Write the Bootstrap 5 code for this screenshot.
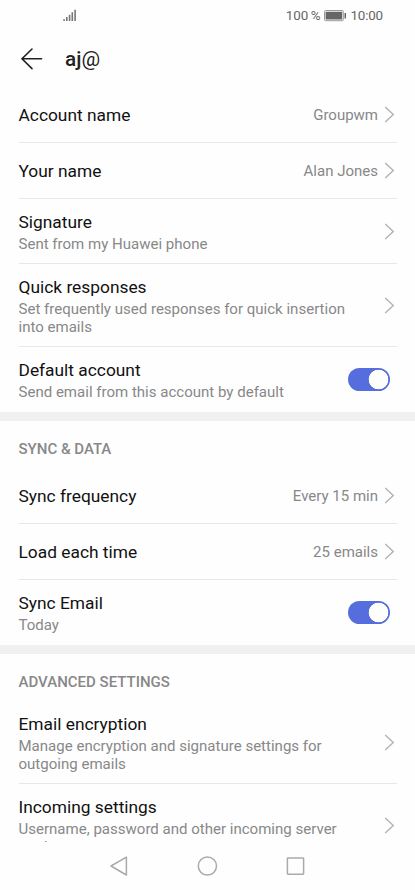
<!DOCTYPE html>
<html lang="en">
<head>
<meta charset="utf-8">
<meta name="viewport" content="width=device-width, initial-scale=1">
<title>Account settings</title>
<link href="https://cdn.jsdelivr.net/npm/bootstrap@5.3.0/dist/css/bootstrap.min.css" rel="stylesheet">
<style>
  body { font-family: Roboto, "Liberation Sans", sans-serif; background: #fefefe; color: #111; }
  svg { display: block; flex: none; }
  .status-bar { height: 31px; padding: 0 32px 0 63px; font-size: 13.4px; line-height: 20px; color: #666; }
  .status-bar span { padding-top: 1px; }
  .status-bar .level { word-spacing: -.6px; letter-spacing: -.1px; }
  .status-bar .clock { letter-spacing: -.15px; }
  .app-bar { height: 56px; padding-left: 20px; gap: 21px; }
  .app-title { font-size: 20.75px; line-height: 24px; font-weight: 500; color: #222; }
  .app-title span { font-weight: 400; }
  .screen-body { min-height: 0; }
  .settings { padding: 0 18.5px; }
  .settings .list-group-item { background: none; color: inherit; border-color: #e8e8e8; padding: 12px 0 10px; }
  .settings .single { height: 56px; padding: 0; }
  .settings .list-group-item:last-child { border-bottom: 0; }
  .settings .ends { padding-bottom: 11px; }
  .name { font-size: 17.35px; line-height: 22px; }
  .note { font-size: 15.04px; line-height: 18px; margin-top: 2px; color: #888; }
  .value { font-size: 15px; line-height: 20px; color: #888; margin-right: 6.5px; padding-top: 1px; }
  .chevron { margin-right: 2px; }
  .section-gap { height: 9px; background: #f0f0f0; }
  .section-title { height: 47px; padding: 10px 18.5px 0; font-size: 15px; line-height: 19px; font-weight: 500; color: #888; }
  .form-check-input.toggle { width: 42px; height: 23px; margin: 0 7px 2px 0; border: 0; float: none; flex: none; border-radius: 12px; }
  .form-check-input.toggle:checked { background: #566ddd radial-gradient(circle at 30.5px 11.5px, #fefefe 9.5px, transparent 10.1px); }
  .nav-keys { height: 48px; }
</style>
<script src="https://cdn.jsdelivr.net/npm/bootstrap@5.3.0/dist/js/bootstrap.bundle.min.js"></script>
</head>
<body>
<svg width="0" height="0" class="position-absolute" aria-hidden="true">
  <symbol id="chev" viewBox="0 0 10 18"><path d="M.2 .9 8.3 8.5 .2 16.1" fill="none" stroke="#b3b3b3" stroke-width="1.4"/></symbol>
</svg>
<div class="d-flex flex-column vh-100 overflow-hidden">
  <header class="status-bar d-flex align-items-center flex-shrink-0">
    <svg width="14" height="13" viewBox="0 0 14 13" fill="#777"><path d="M.3 10.2h1.6V12H.3zM3 8h1.6v4H3zM5.8 5.7h1.6V12H5.8zM8.5 3.2h1.6V12H8.5zM11.3.8h1.6V12h-1.6z"/></svg>
    <span class="level ms-auto">100 %</span>
    <svg class="mx-1" width="22" height="12" viewBox="0 0 22 12"><rect x=".5" y=".5" width="18.8" height="10.2" rx="1" fill="none" stroke="#999"/><path fill="#666" d="M1.6 1.7h16.6v7.8H1.6zM20.5 2.9h1.5v5.5h-1.5z"/></svg>
    <span class="clock">10:00</span>
  </header>
  <div class="app-bar d-flex align-items-center flex-shrink-0">
    <svg width="24" height="24" viewBox="0 0 24 24" fill="none" stroke="#222" stroke-width="1.6" stroke-linecap="round"><path d="M12 2 2 11.8 12 21.6M2.2 11.8H21.6"/></svg>
    <h1 class="app-title mb-0">aj<span>@</span></h1>
  </div>
  <main class="screen-body flex-grow-1 overflow-hidden">
    <div class="settings list-group list-group-flush">
      <div class="list-group-item single d-flex align-items-center"><span class="name me-auto">Account name</span><span class="value">Groupwm</span><svg class="chevron" width="10" height="18"><use href="#chev"/></svg></div>
      <div class="list-group-item single d-flex align-items-center"><span class="name me-auto">Your name</span><span class="value">Alan Jones</span><svg class="chevron" width="10" height="18"><use href="#chev"/></svg></div>
      <div class="list-group-item d-flex align-items-center"><div class="me-auto"><div class="name">Signature</div><div class="note">Sent from my Huawei phone</div></div><svg class="chevron" width="10" height="18"><use href="#chev"/></svg></div>
      <div class="list-group-item d-flex align-items-center"><div class="me-auto"><div class="name">Quick responses</div><div class="note">Set frequently used responses for quick insertion into emails</div></div><svg class="chevron ms-4" width="10" height="18"><use href="#chev"/></svg></div>
      <div class="list-group-item ends d-flex align-items-center"><div class="me-auto"><div class="name">Default account</div><div class="note">Send email from this account by default</div></div><div class="form-switch p-0 d-flex"><input class="form-check-input toggle" type="checkbox" role="switch" aria-label="Default account" checked></div></div>
    </div>
    <div class="section-gap"></div>
    <h2 class="section-title d-flex align-items-center mb-0">SYNC &amp; DATA</h2>
    <div class="settings list-group list-group-flush">
      <div class="list-group-item single d-flex align-items-center"><span class="name me-auto">Sync frequency</span><span class="value">Every 15 min</span><svg class="chevron" width="10" height="18"><use href="#chev"/></svg></div>
      <div class="list-group-item single d-flex align-items-center"><span class="name me-auto">Load each time</span><span class="value">25 emails</span><svg class="chevron" width="10" height="18"><use href="#chev"/></svg></div>
      <div class="list-group-item ends d-flex align-items-center"><div class="me-auto"><div class="name">Sync Email</div><div class="note">Today</div></div><div class="form-switch p-0 d-flex"><input class="form-check-input toggle" type="checkbox" role="switch" aria-label="Sync Email" checked></div></div>
    </div>
    <div class="section-gap"></div>
    <h2 class="section-title d-flex align-items-center mb-0">ADVANCED SETTINGS</h2>
    <div class="settings list-group list-group-flush">
      <div class="list-group-item d-flex align-items-center"><div class="me-auto"><div class="name">Email encryption</div><div class="note">Manage encryption and signature settings for outgoing emails</div></div><svg class="chevron ms-4" width="10" height="18"><use href="#chev"/></svg></div>
      <div class="list-group-item d-flex align-items-center"><div class="me-auto"><div class="name">Incoming settings</div><div class="note">Username, password and other incoming server settings</div></div><svg class="chevron ms-4" width="10" height="18"><use href="#chev"/></svg></div>
    </div>
  </main>
  <nav class="nav-keys d-flex justify-content-center align-items-center flex-shrink-0">
    <svg width="196" height="22" viewBox="0 0 196 22" fill="none" stroke="#aaa" stroke-width="1.5" stroke-linejoin="round"><path d="M1 11 16.4 2.2V20z"/><circle cx="97.4" cy="11" r="9.1"/><rect x="177.4" y="3" width="16.2" height="16.2" rx=".6"/></svg>
  </nav>
</div>
</body>
</html>
